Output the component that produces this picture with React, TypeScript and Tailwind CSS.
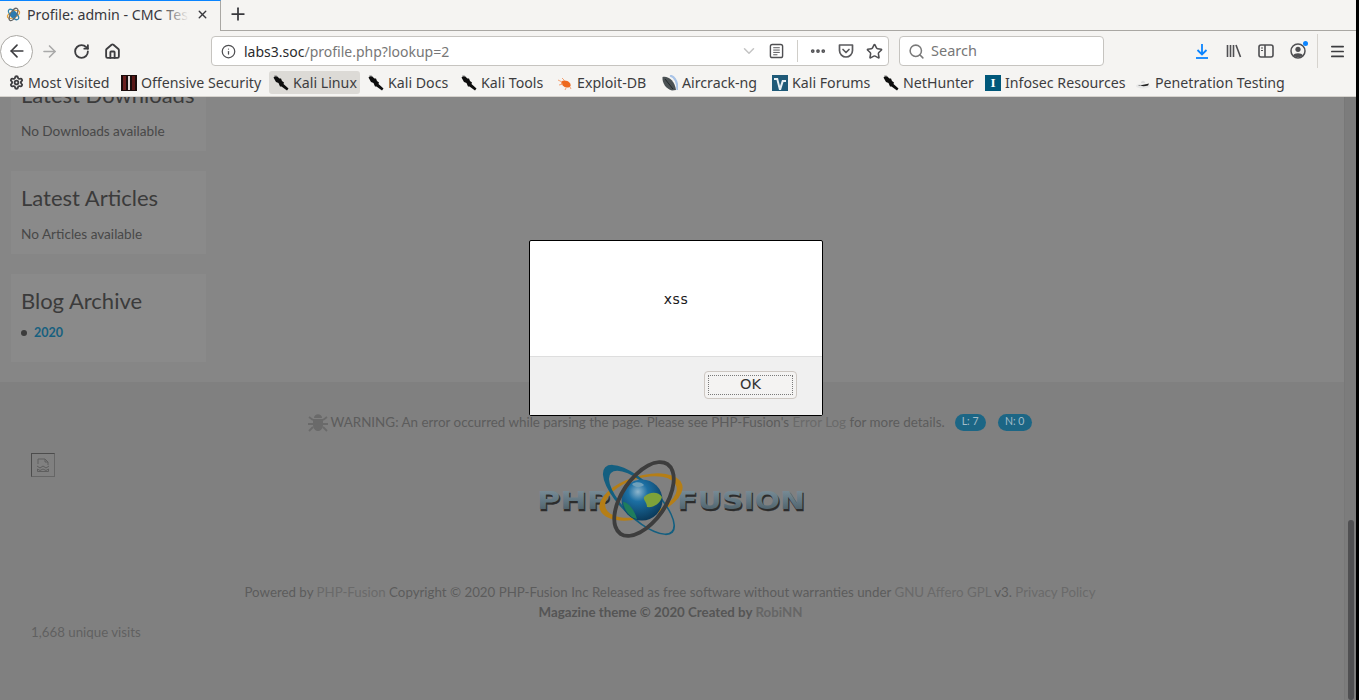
import React from "react";
import { ArrowLeft, ArrowRight, ChevronDown, Ellipsis, Home, Info, Menu, Plus, RotateCw, Search, Settings, Star, X } from "lucide-react";

const uiFont = "font-['Noto_Sans',sans-serif]";
const pageFont = "font-['Lato',sans-serif]";

const KaliIcon = () => (
  <svg viewBox="0 0 16 16" className="w-4 h-4 shrink-0">
    <path d="M0.5 2.5 L3 0.5 L6.5 3.5 L8 3.5 L9 6 L11 7.5 L10.5 9 L15.5 13.5 L14 15.5 L8.5 11.5 L7 11.5 L5.5 8 L3 7 Z" fill="#0d0d0d" />
    <path d="M1 1 L4.5 1.5" stroke="#777" strokeWidth="0.8" />
  </svg>
);

const OffsecIcon = () => (
  <svg viewBox="0 0 16 16" className="w-4 h-4 shrink-0">
    <rect width="16" height="16" fill="#1a0c0c" />
    <rect x="2" y="1" width="3" height="14" fill="#6b1f1f" />
    <rect x="11" y="1" width="3" height="14" fill="#5a1818" />
    <rect x="7" y="1" width="2" height="14" fill="#e0d8d8" />
  </svg>
);

const ExploitIcon = () => (
  <svg viewBox="0 0 16 16" className="w-4 h-4 shrink-0">
    <ellipse cx="9" cy="9" rx="5" ry="3.2" transform="rotate(25 9 9)" fill="#ee6a1f" />
    <path d="M1 5 L5 7 M2 10 L6 9 M5 3 L8 6 M9 13 L8 15 M13 12 L14 14" stroke="#f4a273" strokeWidth="1" />
  </svg>
);

const AircrackIcon = () => (
  <svg viewBox="0 0 16 16" className="w-4 h-4 shrink-0">
    <path d="M8 0.5 C13 2 15.5 8 15.5 15" stroke="#a9c4e8" strokeWidth="2.2" fill="none" />
    <path d="M0.5 2 C6 0.5 13 6 14 15 L10 15.5 C4 14 0 8 0.5 2 Z" fill="#4b5154" />
    <path d="M3 4 L11 14" stroke="#23282a" strokeWidth="1" />
  </svg>
);

const ForumsIcon = () => (
  <svg viewBox="0 0 16 16" className="w-4 h-4 shrink-0">
    <rect width="16" height="16" fill="#1f5a78" />
    <path d="M2 3 H6 L8 11 L10 5 H14 V7 H11.5 L9 15 H7 L4.5 5 H2 Z" fill="#e8f0f4" />
  </svg>
);

const HatIcon = () => (
  <svg viewBox="0 0 16 16" className="w-4 h-4 shrink-0">
    <ellipse cx="8" cy="11" rx="7" ry="2.5" fill="#e8e8e8" />
    <path d="M3 10 C6 10.5 11 9.5 14 8.5 L13 10.5 C10 11.5 6 11.5 3 10 Z" fill="#222" />
    <path d="M6 8 C6 5 10 5 10 8 Z" fill="#ddd" />
  </svg>
);

const InfosecIcon = () => (
  <span className="w-4 h-4 shrink-0 bg-[#00587a] text-white flex items-center justify-center text-[13px] leading-none font-bold font-['Liberation_Serif',serif]">
    I
  </span>
);

const Favicon = () => (
  <svg viewBox="0 0 16 16" className="w-[15px] h-[15px] shrink-0">
    <ellipse cx="8" cy="8" rx="7" ry="3.2" transform="rotate(-25 8 8)" fill="none" stroke="#e8a33a" strokeWidth="1.4" />
    <ellipse cx="8" cy="8" rx="7" ry="3" transform="rotate(45 8 8)" fill="none" stroke="#2d83ad" strokeWidth="1.4" />
    <ellipse cx="8" cy="8" rx="7.4" ry="3" transform="rotate(-60 8 8)" fill="none" stroke="#666" strokeWidth="1.4" />
    <circle cx="8" cy="8" r="3.2" fill="#2b7bb0" />
  </svg>
);

const ReaderIcon = () => (
  <svg viewBox="0 0 16 16" className="w-[15px] h-[16px]" fill="none" stroke="#4f4f52" strokeWidth="1.5">
    <rect x="1.5" y="1" width="13" height="14" rx="2" />
    <path d="M4.5 4.5 H11.5 M4.5 7 H11.5 M4.5 9.5 H11.5 M4.5 12 H9" strokeWidth="1" />
  </svg>
);

const PocketIcon = () => (
  <svg viewBox="0 0 16 16" className="w-4 h-4" fill="none" stroke="#5a5a5d" strokeWidth="1.7">
    <path d="M1.5 2 H14.5 V7.5 C14.5 11 11.5 14 8 14 C4.5 14 1.5 11 1.5 7.5 Z" strokeLinejoin="round" />
    <path d="M5 6.5 L8 9.5 L11 6.5" strokeLinecap="round" strokeLinejoin="round" />
  </svg>
);

const DownloadIcon = () => (
  <svg viewBox="0 0 16 16" className="w-4 h-4" fill="none" stroke="#0a84ff" strokeWidth="1.8">
    <path d="M8 1 V11 M3.5 7 L8 11.5 L12.5 7" />
    <path d="M2 15 H14" />
  </svg>
);

const LibraryIcon = () => (
  <svg viewBox="0 0 16 16" className="w-4 h-4" fill="none" stroke="#4f4f52" strokeWidth="1.6">
    <path d="M1.5 2 V14 M4.5 2 V14 M7.5 2 V14 M10 2 L14.5 14" />
  </svg>
);

const SidebarIcon = () => (
  <svg viewBox="0 0 16 16" className="w-4 h-4" fill="none" stroke="#4f4f52" strokeWidth="1.6">
    <rect x="1" y="2" width="14" height="12" rx="2" />
    <path d="M7 2 V14" />
    <path d="M3 5 H5 M3 7.5 H5" strokeWidth="1" />
  </svg>
);

const AccountIcon = () => (
  <span className="relative w-4 h-4 block">
    <svg viewBox="0 0 16 16" className="w-4 h-4">
      <circle cx="8" cy="8" r="7" fill="none" stroke="#4f4f52" strokeWidth="1.5" />
      <circle cx="8" cy="6.3" r="2.6" fill="#4f4f52" />
      <path d="M3 12.5 C4.5 9.5 11.5 9.5 13 12.5 C11 14.6 5 14.6 3 12.5 Z" fill="#4f4f52" />
    </svg>
    <span className="absolute -top-[2px] -right-[2px] w-[5px] h-[5px] rounded-full bg-[#0a84ff]" />
  </span>
);

const BugIcon = () => (
  <svg viewBox="0 0 20 20" className="w-[20px] h-[20px] shrink-0">
    <path d="M6 6 C6 1 14 1 14 6 Z" fill="#6a6a6a" />
    <path d="M5 7 H15 V13 C15 17 12 19 10 19 C8 19 5 17 5 13 Z" fill="#6a6a6a" />
    <path d="M1 5 L5 8 M19 5 L15 8 M0 12 H5 M20 12 H15 M1 19 L5 15 M19 19 L15 15" stroke="#6a6a6a" strokeWidth="1.8" />
  </svg>
);

const BrokenImage = () => (
  <span className="w-6 h-6 border border-[#4c4c4c] border-b-[#666] border-r-[#666] flex items-center justify-center shrink-0">
    <svg viewBox="0 0 16 16" className="w-4 h-4" fill="none" stroke="#5e5e5e" strokeWidth="1">
      <path d="M3 7 V2 H10 L13 5 V8 M10 2 V5 H13" />
      <path d="M2 9 L5 11 L8 9 L11 11 L14 9 M2.5 12 L5 13.5 L8 12 L11 13.5 L13.5 12 V14.5 H2.5 Z" />
    </svg>
  </span>
);

// one orbit of the logo: an ellipse with an off-centre hole, so the band swells on one side
const Orbit = ({ x, y, rot, rx, ry, irx, iry, shift, fill }: { x: number; y: number; rot: number; rx: number; ry: number; irx: number; iry: number; shift: number; fill: string }) => (
  <path
    transform={`translate(${x} ${y}) rotate(${rot})`}
    fillRule="evenodd"
    fill={fill}
    d={`M ${-rx} 0 A ${rx} ${ry} 0 1 0 ${rx} 0 A ${rx} ${ry} 0 1 0 ${-rx} 0 Z M ${shift - irx} 0 A ${irx} ${iry} 0 1 0 ${shift + irx} 0 A ${irx} ${iry} 0 1 0 ${shift - irx} 0 Z`}
  />
);

const PhpFusionLogo = () => (
  <svg viewBox="0 0 300 100" className="w-[300px] h-[100px]">
    <defs>
      <linearGradient id="letters" x1="0" y1="0" x2="0" y2="1">
        <stop offset="0" stopColor="#7f929c" />
        <stop offset="0.55" stopColor="#5f747f" />
        <stop offset="1" stopColor="#46565e" />
      </linearGradient>
      <radialGradient id="globe" cx="0.4" cy="0.3" r="0.8">
        <stop offset="0" stopColor="#8db5cc" />
        <stop offset="0.3" stopColor="#1c6fa3" />
        <stop offset="1" stopColor="#07304d" />
      </radialGradient>
    </defs>
    <g fontFamily="'DejaVu Sans', sans-serif" fontWeight="700" fontSize="24" stroke="#2c2c2c" strokeWidth="0.4">
      <text x="18" y="61" textLength="73" lengthAdjust="spacingAndGlyphs" fill="#2c2c2c">PHP</text>
      <text x="158" y="61" textLength="128" lengthAdjust="spacingAndGlyphs" fill="#2c2c2c">FUSION</text>
    </g>
    <g fontFamily="'DejaVu Sans', sans-serif" fontWeight="700" fontSize="24" fill="url(#letters)">
      <text x="17" y="59" textLength="73" lengthAdjust="spacingAndGlyphs">PHP</text>
      <text x="157" y="59" textLength="128" lengthAdjust="spacingAndGlyphs">FUSION</text>
    </g>
    <Orbit x={121} y={47} rot={-17} rx={43} ry={21} irx={37} iry={18.5} shift={0} fill="#b57e16" />
    <Orbit x={119} y={50} rot={44} rx={47} ry={18} irx={42} iry={16} shift={3} fill="#145f80" />
    <circle cx="122" cy="50" r="20.5" fill="url(#globe)" />
    <path d="M124 47 C130 41 139 42 142 47 C140 54 133 58 127 57 C127 52 123 50 124 47 Z" fill="#7ea23a" />
    <path d="M103 52 C108 52 114 59 117 69 C110 68 104 60 103 52 Z" fill="#1f7d5c" />
    <path d="M112 34 C116 31 122 32 124 35 C120 38 115 38 112 34 Z" fill="#6fa0bb" />
    <Orbit x={124} y={49} rot={-56} rx={44} ry={24} irx={40} iry={20} shift={0} fill="#3d3d3d" />
  </svg>
);

const bookmarks: { label: string; icon: React.ReactNode; width: string; active?: boolean }[] = [
  { label: "Most Visited", width: "w-[108px]", icon: <Settings className="w-[15px] h-[15px] text-[#3f3f42]" strokeWidth={3} /> },
  { label: "Offensive Security", width: "w-[148px]", icon: <OffsecIcon /> },
  { label: "Kali Linux", width: "w-[91px]", icon: <KaliIcon />, active: true },
  { label: "Kali Docs", width: "w-[89px]", icon: <KaliIcon /> },
  { label: "Kali Tools", width: "w-[92px]", icon: <KaliIcon /> },
  { label: "Exploit-DB", width: "w-[101px]", icon: <ExploitIcon /> },
  { label: "Aircrack-ng", width: "w-[106px]", icon: <AircrackIcon /> },
  { label: "Kali Forums", width: "w-[107px]", icon: <ForumsIcon /> },
  { label: "NetHunter", width: "w-[98px]", icon: <KaliIcon /> },
  { label: "Infosec Resources", width: "w-[146px]", icon: <InfosecIcon /> },
  { label: "Penetration Testing", width: "w-[157px]", icon: <HatIcon /> },
];

const Browser = () => (
  <div className={`${uiFont} bg-[#f5f4f2] h-[97px] shrink-0 border-b border-[#d6d3ce] text-[#3d3d3f] relative z-10`}>
    {/* Tabs */}
    <div className="flex h-[31px]">
      <div className="w-[221px] h-[31px] border-t border-[#0a84ff] border-r border-r-[#a9a7a3] flex items-center pl-[6px] pr-[11px] pb-[3px] gap-[6px] shrink-0">
        <Favicon />
        <div className="relative flex-1 overflow-hidden whitespace-nowrap text-[14.2px] leading-[24px] text-[#38383d]">
          Profile: admin - CMC Test Site
          <span className="absolute right-0 top-0 h-full w-7 bg-gradient-to-r from-transparent to-[#f5f4f2]" />
        </div>
        <X className="w-[13px] h-[13px] text-[#38383d] shrink-0 ml-[1px]" strokeWidth={2.6} />
      </div>
      <div className="flex-1 border-b border-[#a9a7a3] pl-[7px] pb-[3px] flex items-center">
        <Plus className="w-[20px] h-[20px] text-[#38383d]" strokeWidth={2.1} />
      </div>
    </div>
    {/* Navigation */}
    <div className="flex items-center h-[37px] pt-[3px]">
      <div className="w-[33px] h-[33px] rounded-full border border-[#aaa8a4] bg-white flex items-center justify-center shrink-0">
        <ArrowLeft className="w-[20px] h-[20px] text-[#3d3d40]" strokeWidth={2} />
      </div>
      <ArrowRight className="w-[19px] h-[19px] text-[#a9a9a9] ml-[7px] shrink-0" strokeWidth={2} />
      <RotateCw className="w-[17px] h-[17px] text-[#3d3d40] ml-[14px] shrink-0" strokeWidth={2.6} />
      <Home className="w-[17px] h-[17px] text-[#3d3d40] ml-[14px] shrink-0" strokeWidth={2.6} />
      <div className="ml-[90px] w-[678px] h-[30px] bg-white border border-[#c6c4c0] rounded-[4px] flex items-center pl-[9px] shrink-0">
        <Info className="w-[15px] h-[15px] text-[#4f4f52] shrink-0" strokeWidth={2} />
        <span className="ml-[8px] text-[14px] whitespace-nowrap text-[#2b2b2d]">
          labs3.soc<span className="text-[#777]">/profile.php?lookup=2</span>
        </span>
        <div className="flex-1" />
        <ChevronDown className="w-[18px] h-[18px] text-[#c4c4c4] shrink-0" strokeWidth={2} />
        <span className="ml-[11px] shrink-0 flex"><ReaderIcon /></span>
        <span className="ml-[13px] h-[22px] w-px bg-[#d0cec9] shrink-0" />
        <Ellipsis className="ml-[11px] w-[18px] h-[18px] text-[#4f4f52] shrink-0" strokeWidth={3} />
        <span className="ml-[11px] shrink-0 flex"><PocketIcon /></span>
        <Star className="ml-[12px] mr-[5px] w-[17px] h-[17px] text-[#4f4f52] shrink-0" strokeWidth={2.2} />
      </div>
      <div className="ml-[10px] w-[205px] h-[30px] bg-white border border-[#c6c4c0] rounded-[4px] flex items-center pl-[8px] shrink-0">
        <Search className="w-[17px] h-[17px] text-[#7a7a7a]" strokeWidth={2.2} />
        <span className="ml-[6px] text-[14.5px] text-[#777]">Search</span>
      </div>
      <div className="ml-[90px] flex"><DownloadIcon /></div>
      <div className="ml-[16px] flex"><LibraryIcon /></div>
      <div className="ml-[16px] flex"><SidebarIcon /></div>
      <div className="ml-[16px] flex"><AccountIcon /></div>
      <span className="ml-[11px] h-[34px] w-px bg-[#d6d3ce]" />
      <Menu className="ml-[11px] w-[17px] h-[17px] text-[#3d3d40]" strokeWidth={2.4} />
    </div>
    {/* Bookmarks */}
    <div className="flex items-center h-[28px] pt-[1px] pl-[5px] gap-[4px]">
      {bookmarks.map((b) => (
        <div
          key={b.label}
          className={`flex items-center h-[23px] pl-[4px] gap-[4px] rounded-[3px] whitespace-nowrap text-[14.2px] shrink-0 ${b.width} ${b.active ? "bg-[#dcdad6]" : ""}`}
        >
          {b.icon}
          <span>{b.label}</span>
        </div>
      ))}
    </div>
  </div>
);

const Card = ({ title, children, className }: { title: string; children: React.ReactNode; className: string }) => (
  <div className={`bg-[#8a8a8a] w-[195px] px-[10px] ${className}`}>
    <h3 className="h-[54px] pb-[2px] flex items-center text-[22px] font-normal text-[#3b3b3b] whitespace-nowrap">{title}</h3>
    {children}
  </div>
);

const Page = () => (
  <div className={`${pageFont} flex-1 overflow-hidden bg-[#808080] text-[#4a4a4a] flex`}>
    <div className="w-[1344px] flex flex-col">
      {/* Left column */}
      <div className="bg-[#868686] h-[285px] shrink-0 overflow-hidden">
        <div className="-mt-[29px] ml-[11px] flex flex-col gap-[20px]">
          <Card title="Latest Downloads" className="h-[83px]">
            <p className="text-[13.6px] leading-[18px] text-[#484848]">No Downloads available</p>
          </Card>
          <Card title="Latest Articles" className="h-[83px]">
            <p className="text-[13.6px] leading-[18px] text-[#484848]">No Articles available</p>
          </Card>
          <Card title="Blog Archive" className="h-[88px]">
            <div className="flex items-center -mt-[4px] h-[18px]">
              <span className="w-[6px] h-[6px] rounded-full bg-[#3c3c3c]" />
              <span className="ml-[7px] text-[12.5px] font-bold text-[#17607f]">2020</span>
            </div>
          </Card>
        </div>
      </div>
      {/* Footer */}
      <div className="flex-1 flex flex-col text-[#5c5c5c] text-[13.3px]">
        <div className="flex items-center justify-center h-[18px] mt-[31px] pr-[4px]">
          <BugIcon />
          <span className="ml-[2px] whitespace-nowrap text-[13.4px]">
            WARNING: An error occurred while parsing the page. Please see PHP-Fusion's{" "}
            <span className="text-[#6a6a6a]">Error Log</span> for more details.
          </span>
          <span className="ml-[10px] w-[31px] h-[17px] rounded-full bg-[#1c6685] text-[#a3bcc8] text-[10.5px] flex items-center justify-center">L: 7</span>
          <span className="ml-[12px] w-[34px] h-[17px] rounded-full bg-[#1c6685] text-[#a3bcc8] text-[10.5px] flex items-center justify-center">N: 0</span>
        </div>
        <div className="grid grid-cols-[520px_300px_1fr] h-[100px] mt-[19px]">
          <div className="pl-[31px] pt-[3px]"><BrokenImage /></div>
          <PhpFusionLogo />
        </div>
        <p className="text-center mt-[32px] pr-[4px] h-[20px] leading-[20px] whitespace-nowrap">
          Powered by <span className="text-[#6a6a6a]">PHP-Fusion</span> Copyright © 2020 PHP-Fusion Inc Released as free software without warranties under{" "}
          <span className="text-[#6a6a6a]">GNU Affero GPL</span> v3. <span className="text-[#6a6a6a]">Privacy Policy</span>
        </p>
        <p className="text-center pr-[3px] h-[20px] leading-[20px] font-bold text-[#555]">
          Magazine theme © 2020 Created by <span className="text-[#666]">RobiNN</span>
        </p>
        <p className="pl-[31px] h-[20px] leading-[20px] text-[#606060]">1,668 unique visits</p>
      </div>
    </div>
    {/* Scrollbar */}
    <div className="w-[12px] bg-[#7c7c7c] flex flex-col justify-end items-center shrink-0 border-l border-[#787878]">
      <div className="w-[6px] h-[180px] rounded-full bg-[#505052]" />
    </div>
  </div>
);

export default function App() {
  return (
    <div className="w-[1359px] h-[700px] overflow-hidden flex relative bg-black">
      <div className="w-[1356px] h-full flex flex-col">
        <Browser />
        <Page />
      </div>
      {/* Alert */}
      <div className="absolute left-[529px] top-[240px] w-[294px] h-[176px] bg-white border border-black rounded-[2px] flex flex-col font-['DejaVu_Sans',sans-serif] z-20">
        <div className="h-[115px] flex items-center justify-center text-[14px] tracking-[0.5px] text-[#1a1a1a] pt-[1px]">xss</div>
        <div className="flex-1 bg-[#f0f0f0] border-t border-[#dedede] flex items-center justify-end pr-[25px] pb-[3px]">
          <button className="w-[93px] h-[28px] rounded-[4px] border border-[#cdc7c2] bg-[#f4f3f2] p-[3px]">
            <span className="w-full h-full border border-dotted border-[#7a7a7a] flex items-center justify-center text-[14.5px] text-[#333]">OK</span>
          </button>
        </div>
      </div>
    </div>
  );
}
